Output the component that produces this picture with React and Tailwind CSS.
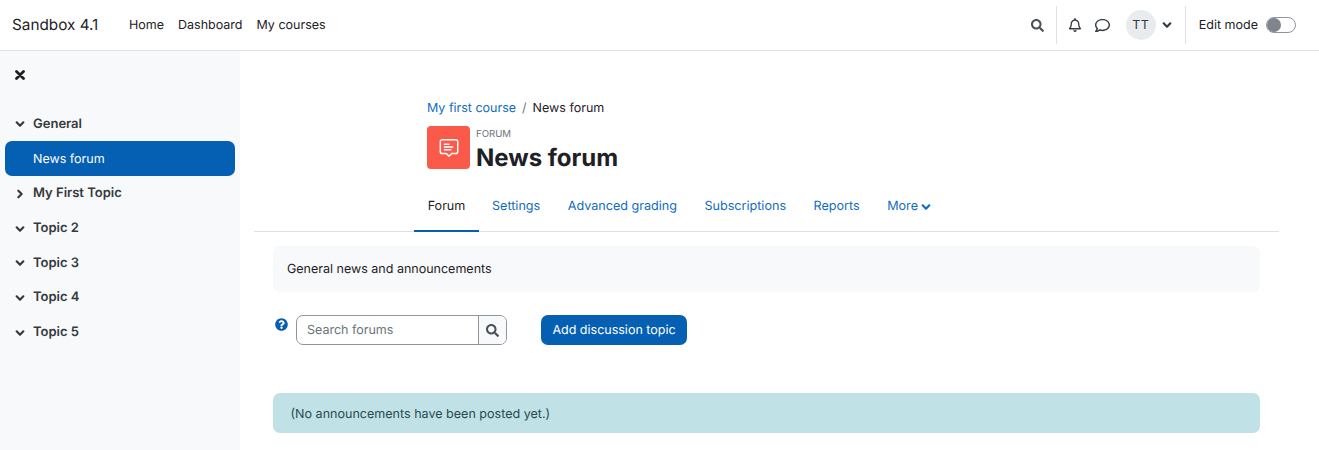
import React from 'react';
import { FaSearch, FaRegBell, FaRegComment, FaQuestionCircle } from 'react-icons/fa';

const topics = [
  { name: 'My First Topic', open: false },
  { name: 'Topic 2', open: true },
  { name: 'Topic 3', open: true },
  { name: 'Topic 4', open: true },
  { name: 'Topic 5', open: true },
];

const tabs = ['Settings', 'Advanced grading', 'Subscriptions', 'Reports'];

const Chevron = ({ open, className }) => (
  <svg viewBox="0 0 12 12" className={className} fill="none" stroke="currentColor" strokeWidth="2.6" strokeLinecap="round" strokeLinejoin="round">
    {open ? <path d="M2 4l4 4 4-4" /> : <path d="M4 2l4 4-4 4" />}
  </svg>
);

const SectionRow = ({ name, open }) => (
  <div className="h-[34.7px] flex items-center pl-[15px] pt-[2px] text-[13px] font-semibold text-[#343a40]">
    <span className="w-[18px] flex items-center">
      <Chevron open={open} className="w-[10px] h-[10px]" />
    </span>
    {name}
  </div>
);

const App = () => {
  return (
    <div className="h-[450px] w-[1319px] overflow-hidden bg-white text-[#1d2125] font-['Inter',sans-serif] [text-rendering:geometricPrecision] flex flex-col">
      {/* Header */}
      <header className="h-[51px] shrink-0 border-b border-[#dee2e6] flex items-center pl-[12px]">
        <span className="text-[15.3px] text-[#1d2125] w-[117px]">Sandbox 4.1</span>
        <nav className="flex gap-[14px] pt-[2px] text-[12.5px] text-[#1d2125]">
          <span>Home</span>
          <span>Dashboard</span>
          <span>My courses</span>
        </nav>
        <div className="ml-auto flex items-center">
          <FaSearch className="w-[13px] h-[13px] text-[#495057]" />
          <div className="w-px h-[38px] bg-[#dee2e6] ml-[12px]"></div>
          <FaRegBell className="w-[14px] h-[14px] ml-[11px] text-[#343a40]" />
          <FaRegComment className="w-[15px] h-[15px] ml-[13px] text-[#343a40]" />
          <div className="w-[30px] h-[30px] rounded-full bg-[#e9ecef] flex items-center justify-center pt-[2px] text-[12.5px] tracking-[0.5px] text-[#343a40] ml-[16px]">TT</div>
          <Chevron open className="w-[10px] h-[10px] ml-[6px] text-[#343a40]" />
          <div className="w-px h-[38px] bg-[#dee2e6] ml-[13px]"></div>
          <span className="text-[12.5px] ml-[13px] pt-[2px] mr-[8px]">Edit mode</span>
          <div className="w-[30px] h-[16px] rounded-full border border-[#8f959e] mr-[23px] bg-white flex items-center">
            <div className="w-[14px] h-[14px] rounded-full bg-[#80858c]"></div>
          </div>
        </div>
      </header>

      <div className="flex flex-1 min-h-0">
        {/* Course index */}
        <aside className="w-[240px] shrink-0 bg-[#f8f9fa]">
          <div className="pl-[15px] pt-[19px] h-[55px]">
            <svg viewBox="0 0 10 10" className="w-[10px] h-[10px] text-[#1d2125]" fill="none" stroke="currentColor" strokeWidth="2.8" strokeLinecap="round">
              <path d="M1.500 1.500l7 7M8.500 1.500l-7 7" />
            </svg>
          </div>
          <SectionRow name="General" open={true} />
          <div className="mx-[5px] h-[35px] rounded-[7px] bg-[#0560b3] text-white text-[12.5px] flex items-center pl-[28px] pt-[4px]">News forum</div>
          {topics.map((t) => (
            <SectionRow key={t.name} name={t.name} open={t.open} />
          ))}
        </aside>

        {/* Main */}
        <main className="flex-1 pl-[14px] pr-[40px]">
          <div className="pl-[173px] pt-[50px]">
            <div className="text-[12.5px] leading-[16px] flex items-center">
              <span className="text-[#0f6cbf]">My first course</span>
              <span className="mx-[6px] text-[#6a737b]">/</span>
              <span>News forum</span>
            </div>
            <div className="flex items-center mt-[9px]">
              <div className="w-[43px] h-[43px] rounded-[4px] bg-[#fb5a4b] flex items-center justify-center self-start">
                <svg width="22" height="22" viewBox="0 0 24 24" fill="none" stroke="white" strokeWidth="1.6" strokeLinejoin="round" strokeLinecap="round">
                  <path d="M4.500 3h15a2 2 0 0 1 2 2v11a2 2 0 0 1-2 2H15l-3 3-3-3H4.500a2 2 0 0 1-2-2V5a2 2 0 0 1 2-2z" />
                  <path d="M7 8h5M7 11h9M7 14h7" />
                </svg>
              </div>
              <div className="ml-[6px] self-start">
                <div className="text-[9.6px] leading-[12px] text-[#6a737b] uppercase mt-[3px]">Forum</div>
                <h1 className="text-[24px] leading-[29px] font-bold text-[#1d2125] mt-[2px]">News forum</h1>
              </div>
            </div>
          </div>

          {/* Tabs */}
          <div className="mt-[17px] h-[43px] border-b border-[#dee2e6] pl-[160px] flex text-[12.6px] text-[#0f6cbf]">
            <div className="h-[43px] w-[65px] pb-[5px] flex items-center justify-center text-[#1d2125] border-b-2 border-[#0560b3]">Forum</div>
            <div className="flex items-center gap-[27.500px] ml-[13px] pb-[6px]">
              {tabs.map((t) => (
                <span key={t}>{t}</span>
              ))}
              <span className="flex items-center gap-[3px]">
                More <Chevron open className="w-[10px] h-[10px]" />
              </span>
            </div>
          </div>

          <div className="px-[19px]">
            <div className="mt-[14px] h-[46px] rounded-[7px] bg-[#f8f9fa] flex items-center pl-[14px] pt-[2px] text-[12.5px]">General news and announcements</div>

            <div className="mt-[23px] flex items-start">
              <FaQuestionCircle className="w-[13px] h-[13px] mt-[3px] ml-[2px] text-[#0560b3]" />
              <div className="ml-[8px] w-[211px] h-[30px] rounded-[7px] border border-[#8f959e] flex overflow-hidden">
                <div className="flex-1 flex items-center pl-[10px] pt-[2px] text-[12.5px] text-[#6a737b]">Search forums</div>
                <div className="w-[28px] border-l border-[#8f959e] bg-[#f8f9fa] flex items-center justify-center">
                  <FaSearch className="w-[13px] h-[13px] text-[#495057]" />
                </div>
              </div>
              <div className="ml-[34px] w-[146px] h-[30px] rounded-[7px] bg-[#0560b3] text-white text-[12.5px] pt-[2px] flex items-center justify-center">Add discussion topic</div>
            </div>

            <div className="mt-[48px] h-[40px] rounded-[7px] bg-[#c0e1e5] flex items-center pl-[17.500px] pt-[4px] text-[12.55px] text-[#2a4a50]">(No announcements have been posted yet.)</div>
          </div>
        </main>
      </div>
    </div>
  );
};

export default App;
